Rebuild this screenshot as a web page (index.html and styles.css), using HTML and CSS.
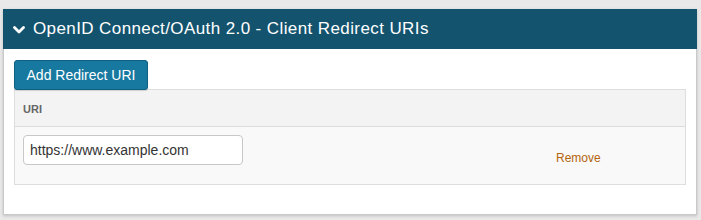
FILE: index.html
```html
<!DOCTYPE html>
<html>
<head>
<meta charset="utf-8">
<link rel="stylesheet" href="styles.css">
</head>
<body>
<div class="panel">
  <div class="panel-head">
    <svg class="chev" width="12" height="8" viewBox="0 0 12 8"><polyline points="1.5,1.5 6,6 10.5,1.5" fill="none" stroke="#fff" stroke-width="2.8" stroke-linecap="round" stroke-linejoin="round"/></svg>
    <span class="title">OpenID Connect/OAuth 2.0 - Client Redirect URIs</span>
  </div>
  <div class="panel-body">
    <button class="btn">Add Redirect URI</button>
    <div class="table">
      <div class="thead">
        <div class="th">URI</div>
      </div>
      <div class="trow">
        <div class="td-uri"><input class="uri-input" type="text" value="https://www.example.com"></div>
        <div class="td-act"><a class="remove">Remove</a></div>
      </div>
    </div>
  </div>
</div>
</body>
</html>
```
FILE: styles.css
```css
html, body {
  margin: 0;
  padding: 0;
}
body {
  background: #e9e9e9;
  font-family: "Liberation Sans", Arial, sans-serif;
  width: 701px;
  height: 220px;
  overflow: hidden;
  padding-top: 9px;
  box-sizing: border-box;
}
.panel {
  margin-left: 3px;
  width: 694px;
  background: #fff;
  border: 1px solid #c9c9c9;
  border-top: none;
  box-sizing: border-box;
  box-shadow: 0 1px 3px rgba(0,0,0,0.18);
}
.panel-head {
  height: 40px;
  background: #13536e;
  margin: 0 -1px;
  display: flex;
  align-items: center;
  padding-left: 10px;
  color: #fff;
}
.chev {
  margin-right: 8px;
  margin-top: 1px;
}
.title {
  font-size: 17px;
  letter-spacing: 0.4px;
}
.panel-body {
  padding: 11px 10px 29px 10px;
}
.btn {
  display: block;
  height: 30px;
  width: 134px;
  padding: 0;
  background: #17799f;
  border: 1px solid #0f5f80;
  border-radius: 3px;
  color: #fff;
  font-family: "Liberation Sans", Arial, sans-serif;
  font-size: 14px;
  box-shadow: 0 1px 1px rgba(0,0,0,0.15);
  position: relative;
  z-index: 1;
}
.table {
  width: 672px;
  margin-top: -1px;
  border: 1px solid #dedede;
  box-sizing: border-box;
}
.thead {
  height: 36px;
  background: #f3f3f3;
  border-bottom: 1px solid #dcdcdc;
  display: flex;
  align-items: center;
  padding-left: 8px;
}
.th {
  font-size: 11px;
  font-weight: bold;
  color: #666;
  margin-top: 1px;
}
.trow {
  height: 57px;
  background: #f9f9f9;
  display: flex;
  box-sizing: border-box;
  padding-top: 8px;
}
.td-uri {
  padding-left: 8px;
  width: 533px;
}
.uri-input {
  width: 220px;
  height: 30px;
  box-sizing: border-box;
  border: 1px solid #c8c8c8;
  border-radius: 4px;
  background: #fff;
  padding: 0 0 0 6px;
  font-family: "Liberation Sans", Arial, sans-serif;
  font-size: 14px;
  color: #333;
  outline: none;
}
.td-act {
  padding-top: 13px;
}
.remove {
  font-size: 12px;
  color: #b5650c;
  cursor: pointer;
}
```
